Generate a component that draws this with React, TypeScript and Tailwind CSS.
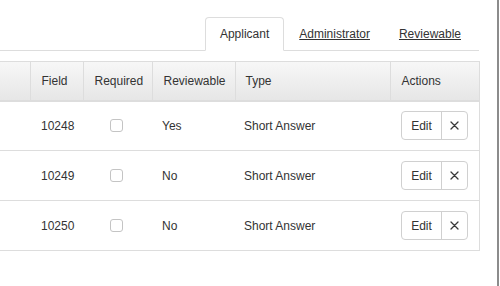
import React from "react";

const rows = [
  { id: "10248", rev: "Yes" },
  { id: "10249", rev: "No" },
  { id: "10250", rev: "No" },
];

function XIcon() {
  return (
    <svg width="9" height="9" viewBox="0 0 9 9" fill="none">
      <path d="M1 1L8 8M8 1L1 8" stroke="#3a3a3a" strokeWidth="1.3" strokeLinecap="round" />
    </svg>
  );
}

export default function App() {
  return (
    <div
      className="w-[500px] h-[286px] bg-white flex overflow-hidden text-[12px] text-[#333]"
      style={{ fontFamily: '"Liberation Sans", Arial, sans-serif' }}
    >
      <div className="w-[497px] shrink-0 flex flex-col">
        {/* Tabs */}
        <div className="pt-[17px] w-[479px]">
          <div className="flex justify-end pr-[3px] border-b border-[#dddddd] h-[34px]">
            <div className="h-[34px] px-[14px] border border-[#dddddd] border-b-white rounded-t-[4px] bg-white flex items-center -mb-px">
              Applicant
            </div>
            <div className="h-[33px] pl-[15px] pr-[14px] flex items-center underline text-[#333]">Administrator</div>
            <div className="h-[33px] px-[15px] flex items-center underline text-[#333]">Reviewable</div>
          </div>
        </div>

        {/* Table */}
        <div className="mt-[10px] w-[479px]">
          <table className="w-[479px] border-collapse table-fixed">
            <colgroup>
              <col className="w-[30px]" />
              <col className="w-[53px]" />
              <col className="w-[69px]" />
              <col className="w-[83px]" />
              <col className="w-[155px]" />
              <col className="w-[89px]" />
            </colgroup>
            <thead>
              <tr className="h-[39px] bg-gradient-to-b from-[#f7f7f7] to-[#e6e6e6]">
                <th className="border-t border-r border-b-2 border-[#dddddd] font-normal text-left"></th>
                <th className="border border-b-2 border-[#dddddd] font-normal text-left px-[11px]">Field</th>
                <th className="border border-b-2 border-[#dddddd] font-normal text-left px-[11px]">Required</th>
                <th className="border border-b-2 border-[#dddddd] font-normal text-left px-[11px]">Reviewable</th>
                <th className="border border-b-2 border-[#dddddd] font-normal text-left px-[10px]">Type</th>
                <th className="border border-b-2 border-[#dddddd] font-normal text-left px-[11px]">Actions</th>
              </tr>
            </thead>
            <tbody>
              {rows.map((r) => (
                <tr key={r.id} className="h-[50px]">
                  <td className="border-b border-[#dddddd]"></td>
                  <td className="border-b border-[#dddddd] px-[11px]">{r.id}</td>
                  <td className="border-b border-[#dddddd]">
                    <div className="flex justify-center pr-[2px]">
                      <span className="w-[13px] h-[13px] border border-[#c4c4c4] rounded-[3px] bg-white"></span>
                    </div>
                  </td>
                  <td className="border-b border-[#dddddd] px-[10px]">{r.rev}</td>
                  <td className="border-b border-[#dddddd] px-[9px]">Short Answer</td>
                  <td className="border-b border-r border-[#dddddd] pl-[11px]">
                    <div className="flex h-[29px] w-[67px] border border-[#d0d0d0] rounded-[4px] bg-white">
                      <div className="w-[40px] flex items-center justify-center border-r border-[#d0d0d0]">Edit</div>
                      <div className="flex-1 flex items-center justify-center">
                        <XIcon />
                      </div>
                    </div>
                  </td>
                </tr>
              ))}
            </tbody>
          </table>
        </div>
      </div>
      <div className="w-[2px] h-full bg-[#8c8c8c] shrink-0"></div>
      <div className="flex-1 bg-white"></div>
    </div>
  );
}
